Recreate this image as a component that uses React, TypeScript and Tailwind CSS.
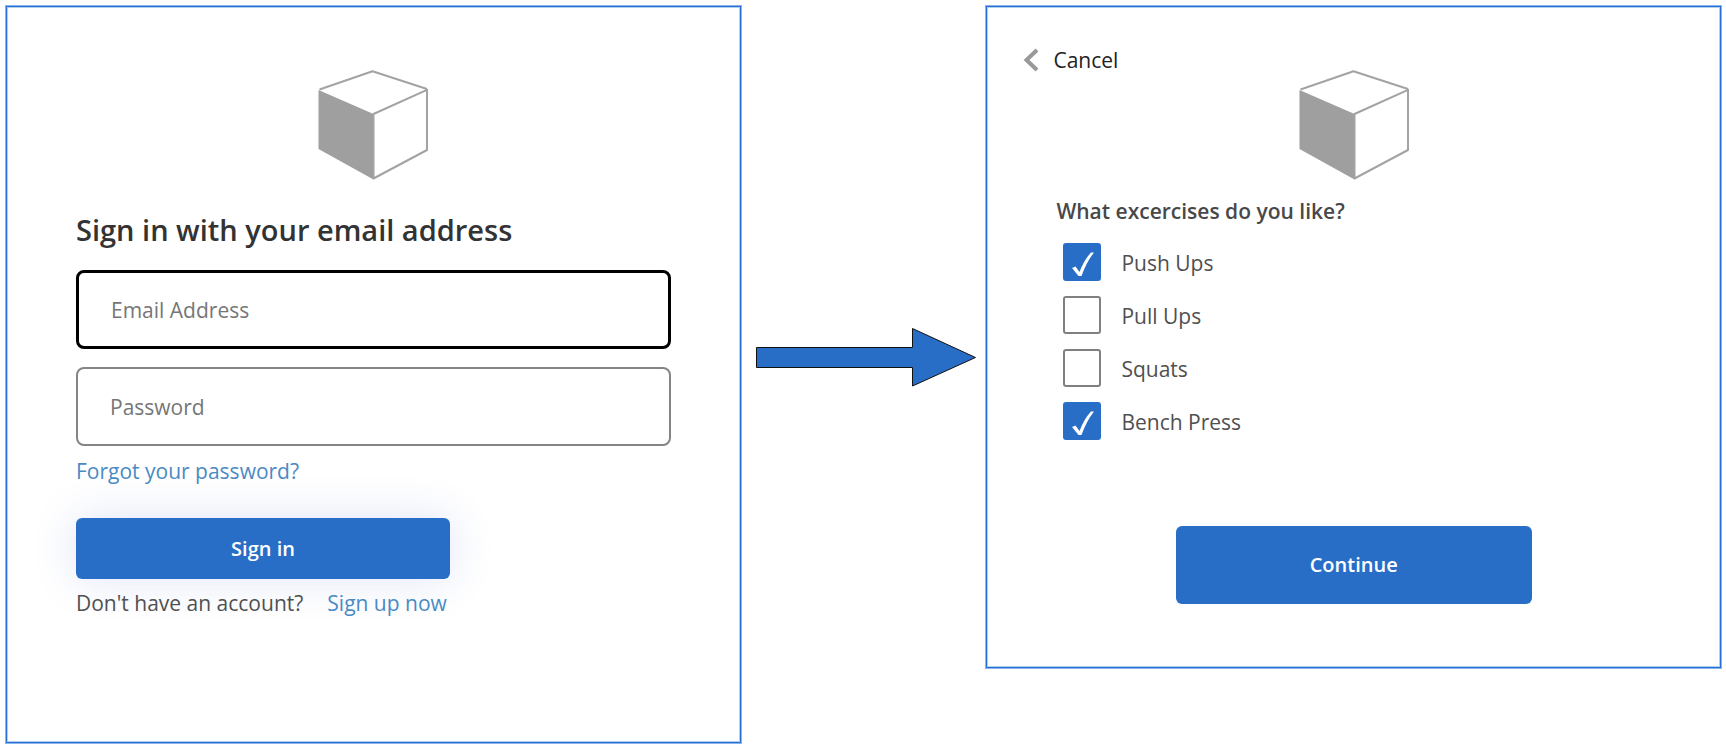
import { useState } from "react";

const EXERCISES = ["Push Ups", "Pull Ups", "Squats", "Bench Press"];

function CubeLogo() {
  return (
    <svg viewBox="0 0 110 110" className="block size-[110px] shrink-0" aria-hidden="true">
      <path d="M1 20 L54.5 1 L109 19 V80 L55 108.5 L1 78.5 Z" fill="#fff" />
      <path d="M0.5 20 L55.5 44 V109.5 L0.5 79 Z" fill="#9f9f9f" />
      <path
        d="M1.5 19.5 L54.5 1.3 L109 19 M109 19 V80 L55.5 108.5 V44 L109 19.8"
        fill="none"
        stroke="#a3a3a3"
        strokeWidth="2"
        strokeLinejoin="round"
      />
    </svg>
  );
}

function SignInPanel() {
  return (
    <form
      className="flex min-h-[739px] flex-col items-center border border-[#8db4e8] bg-white px-[70px] pt-[64px] shadow-[inset_0_0_0_1px_#2470d6,inset_0_0_0_2px_#b4cdef]"
      onSubmit={(e) => e.preventDefault()}
    >
      <CubeLogo />
      <div className="flex w-full flex-col items-start">
        <h1 className="mt-[30px] text-[29px] leading-[40px] font-semibold text-[#333]">
          Sign in with your email address
        </h1>
        <input
          type="email"
          aria-label="Email Address"
          placeholder="Email Address"
          className="mt-5 h-[79px] w-full rounded-[8px] border-3 border-black px-8 text-[21px] text-[#333] outline-none placeholder:text-[#767676]"
        />
        <input
          type="password"
          aria-label="Password"
          placeholder="Password"
          className="mt-[18px] h-[79px] w-full rounded-[8px] border-2 border-[#858585] px-8 text-[21px] text-[#333] outline-none placeholder:text-[#767676]"
        />
        <a href="#forgot" className="mt-[10px] text-[21px] leading-[30px] text-[#4a8ac4]">
          Forgot your password?
        </a>
        <button
          type="submit"
          className="mt-[32px] h-[61px] w-[374px] rounded-[6px] bg-[#286ec7] text-[20px] font-semibold text-white shadow-[0_0_44px_rgba(40,80,200,0.15)]"
        >
          Sign in
        </button>
        <p className="mt-[9px] flex gap-6 text-[21px] leading-[30px] text-[#505050]">
          Don't have an account?
          <a href="#signup" className="text-[#4a8ac4]">
            Sign up now
          </a>
        </p>
      </div>
    </form>
  );
}

function Arrow() {
  return (
    <svg viewBox="0 0 222 60" className="mt-[322px] block h-[60px] w-[222px]" aria-hidden="true">
      <path
        d="M1.5 20.5 H157.5 V1.5 L220.5 30.5 L157.5 59 V40.5 H1.5 Z"
        fill="#286ec7"
        stroke="#111"
        strokeWidth="1"
      />
    </svg>
  );
}

function Exercise({ name, initial }: { name: string; initial: boolean }) {
  const [checked, setChecked] = useState(initial);
  return (
    <label className="flex h-[38px] items-center gap-5 text-[21px] leading-[30px] text-[#505050]">
      <span className="grid size-[38px] shrink-0">
        <input
          type="checkbox"
          checked={checked}
          onChange={(e) => setChecked(e.target.checked)}
          className="col-start-1 row-start-1 size-[38px] appearance-none rounded-[3px] border-2 border-[#808080] bg-white checked:border-[#286ec7] checked:bg-[#286ec7]"
        />
        {checked && (
          <svg viewBox="0 0 38 38" className="pointer-events-none col-start-1 row-start-1 size-[38px]" aria-hidden="true">
            <path d="M9 25 L12.5 23.5 L16.5 29 Q21 17 28 9.5 L31 9.5 Q23.5 19 18.5 33 L15.5 33 Z" fill="#fff" />
          </svg>
        )}
      </span>
      <span className="pt-[2px]">{name}</span>
    </label>
  );
}

function ExercisePanel() {
  return (
    <form
      className="flex min-h-[664px] flex-col border border-[#8db4e8] bg-white px-[37px] pt-[39px] shadow-[inset_0_0_0_1px_#2470d6,inset_0_0_0_2px_#b4cdef]"
      onSubmit={(e) => e.preventDefault()}
    >
      <button type="button" className="flex h-[30px] items-center gap-[14px] self-start text-[21px] leading-[30px] text-[#222]">
        <svg viewBox="0 0 16 24" className="h-6 w-4" aria-hidden="true">
          <path d="M14 2 L3.5 12 L14 22" fill="none" stroke="#999" strokeWidth="4" />
        </svg>
        Cancel
      </button>
      <div className="-mt-[5px] flex justify-center">
        <CubeLogo />
      </div>
      <fieldset className="mt-4 px-[33px]">
        <legend className="text-[21px] leading-[30px] font-semibold text-[#484848]">What excercises do you like?</legend>
        <div className="mt-[17px] flex flex-col gap-[15px] pl-[7px]">
          {EXERCISES.map((name, i) => (
            <Exercise key={name} name={name} initial={i === 0 || i === 3} />
          ))}
        </div>
      </fieldset>
      <button
        type="submit"
        className="mt-[86px] h-[78px] w-[356px] self-center rounded-[6px] bg-[#286ec7] text-[20px] font-semibold text-white"
      >
        Continue
      </button>
    </form>
  );
}

export default function App() {
  return (
    <main className="grid grid-cols-[737fr_244fr_737fr] items-start bg-white pt-[5px] pr-1 pl-[5px] font-['Open_Sans','Noto_Sans',sans-serif]">
      <SignInPanel />
      <div className="flex justify-end pr-2">
        <Arrow />
      </div>
      <ExercisePanel />
    </main>
  );
}
